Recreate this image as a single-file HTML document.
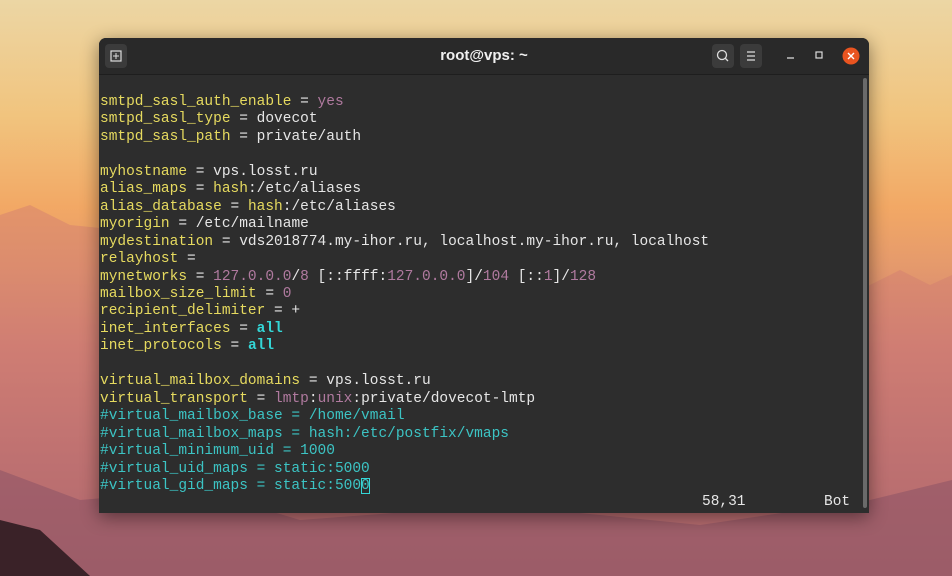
<!DOCTYPE html>
<html><head><meta charset="utf-8"><style>
html,body{margin:0;padding:0;width:952px;height:576px;overflow:hidden}
body{position:relative;background:linear-gradient(180deg,#ecd6a4 0%,#f1c47e 20%,#f2a865 36%,#e59a6c 46%,#cf7f76 60%,#b26a72 78%,#93566a 100%);font-family:"Liberation Sans",sans-serif}
.mt{position:absolute;left:0;top:0;width:952px;height:576px}
.win{position:absolute;left:99px;top:38px;width:770px;height:475px;background:#2d2d2d;border-radius:7px 7px 0 0;box-shadow:0 4px 18px rgba(0,0,0,.45);overflow:hidden}
.tb{position:absolute;left:0;top:0;width:770px;height:36px;background:#292929;border-bottom:1px solid #1e1e1e}
.title{position:absolute;left:0;width:770px;top:9px;text-align:center;color:#f0f0f0;font-weight:bold;font-size:15px}
.btn{position:absolute;top:6px;width:22px;height:24px;background:#3b3b3b;border-radius:4px}
.term{position:absolute;left:1px;top:56px;font-family:"Liberation Mono",monospace;font-size:14.5px;line-height:17.45px;color:#e6e6e6;white-space:pre}
.st{position:absolute;top:456px;font-family:"Liberation Mono",monospace;font-size:14.5px;line-height:17.45px;color:#e6e6e6;white-space:pre}
.y{color:#e6da5f}.p{color:#b07a9f}.c{color:#34d6d6;font-weight:bold}.k{color:#3cc4c4}
.sb{position:absolute;right:2px;top:40px;width:4px;height:430px;background:#6a6a6a;border-radius:2px}
.cur{outline:1px solid #34d6d6;outline-offset:-1px}
</style></head><body>
<svg class="mt" viewBox="0 0 952 576"><path d="M0 215 L30 205 L70 225 L120 230 L860 290 L900 270 L930 285 L952 275 L952 576 L0 576Z" fill="#d07d72" opacity=".45"/><path d="M0 470 L80 500 L200 490 L300 520 L500 505 L700 525 L870 500 L952 480 L952 576 L0 576Z" fill="#8f5565" opacity=".6"/><path d="M0 520 L40 530 L90 576 L0 576Z" fill="#3a2228"/></svg>
<div class="win">
<div class="tb">
<div class="btn" style="left:6px"><svg width="22" height="24"><rect x="6" y="7" width="10" height="10" fill="none" stroke="#ddd" stroke-width="1.2"/><path d="M11 9v6M8 12h6" stroke="#ddd"/></svg></div>
<div class="title">root@vps: ~</div>
<div class="btn" style="left:613px"><svg width="22" height="24"><circle cx="10" cy="11" r="4.5" fill="none" stroke="#ddd" stroke-width="1.3"/><path d="M13 14l3 3" stroke="#ddd" stroke-width="1.3"/></svg></div>
<div class="btn" style="left:641px"><svg width="22" height="24"><path d="M7 8h8M7 12h8M7 16h8" stroke="#ddd" stroke-width="1.3"/></svg></div>
<svg style="position:absolute;left:684px;top:10px" width="16" height="16"><path d="M4 10h7" stroke="#ddd" stroke-width="1.3"/></svg>
<svg style="position:absolute;left:713px;top:10px" width="16" height="16"><rect x="4" y="4" width="6" height="6" fill="none" stroke="#ddd" stroke-width="1.2"/></svg>
<svg style="position:absolute;left:742px;top:8px" width="20" height="20"><circle cx="10" cy="10" r="8.5" fill="#e95420"/><path d="M7 7l6 6M13 7l-6 6" stroke="#fff" stroke-width="1.4"/></svg>
</div>
<div class="sb"></div>
<div class="term"><span class="y">smtpd_sasl_auth_enable</span> = <span class="p">yes</span>
<span class="y">smtpd_sasl_type</span> = dovecot
<span class="y">smtpd_sasl_path</span> = private/auth

<span class="y">myhostname</span> = vps.losst.ru
<span class="y">alias_maps</span> = <span class="y">hash</span>:/etc/aliases
<span class="y">alias_database</span> = <span class="y">hash</span>:/etc/aliases
<span class="y">myorigin</span> = /etc/mailname
<span class="y">mydestination</span> = vds2018774.my-ihor.ru, localhost.my-ihor.ru, localhost
<span class="y">relayhost</span> =
<span class="y">mynetworks</span> = <span class="p">127.0.0.0</span>/<span class="p">8</span> [::ffff:<span class="p">127.0.0.0</span>]/<span class="p">104</span> [::<span class="p">1</span>]/<span class="p">128</span>
<span class="y">mailbox_size_limit</span> = <span class="p">0</span>
<span class="y">recipient_delimiter</span> = +
<span class="y">inet_interfaces</span> = <span class="c">all</span>
<span class="y">inet_protocols</span> = <span class="c">all</span>

<span class="y">virtual_mailbox_domains</span> = vps.losst.ru
<span class="y">virtual_transport</span> = <span class="p">lmtp</span>:<span class="p">unix</span>:private/dovecot-lmtp
<span class="k">#virtual_mailbox_base = /home/vmail
#virtual_mailbox_maps = hash:/etc/postfix/vmaps
#virtual_minimum_uid = 1000
#virtual_uid_maps = static:5000
#virtual_gid_maps = static:500<span class="cur">0</span></span></div>
<div class="st" style="left:603px">58,31</div>
<div class="st" style="left:725px">Bot</div>
</div>
</body></html>
